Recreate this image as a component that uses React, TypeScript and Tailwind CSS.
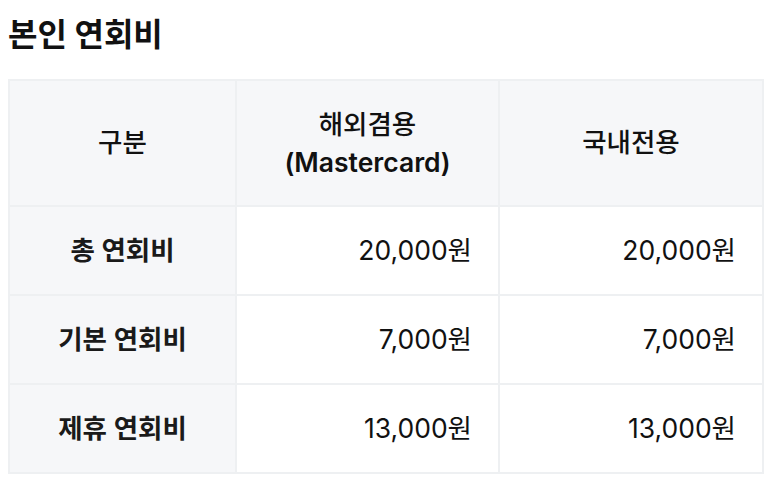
const rows = [
  { label: "총 연회비", overseas: "20,000원", domestic: "20,000원" },
  { label: "기본 연회비", overseas: "7,000원", domestic: "7,000원" },
  { label: "제휴 연회비", overseas: "13,000원", domestic: "13,000원" },
];

export default function App() {
  return (
    <div
      className="bg-white px-2 pt-[12px] text-[#111]"
      style={{ fontFamily: 'Inter, "Noto Sans CJK KR", sans-serif' }}
    >
      <h2 className="text-[32px] font-bold leading-[46px]">본인 연회비</h2>
      <table className="mt-[21px] w-[754px] table-fixed border-collapse text-[26.5px]">
        <colgroup>
          <col className="w-[227px]" />
          <col className="w-[263px]" />
          <col className="w-[264px]" />
        </colgroup>
        <thead>
          <tr className="h-[126px] bg-[#f6f7f9]">
            <th className="border-2 border-[#eef0f2] font-medium">구분</th>
            <th className="border-2 border-[#eef0f2] font-medium leading-[38px]">
              해외겸용
              <br />
              <span className="font-semibold">(Mastercard)</span>
            </th>
            <th className="border-2 border-[#eef0f2] font-medium">국내전용</th>
          </tr>
        </thead>
        <tbody>
          {rows.map(r => (
            <tr key={r.label} className="h-[89px]">
              <td className="border-2 border-[#eef0f2] bg-[#f6f7f9] text-center font-semibold text-[#1a1a1a]">
                {r.label}
              </td>
              <td className="border-2 border-[#eef0f2] pr-[26px] text-right">{r.overseas}</td>
              <td className="border-2 border-[#eef0f2] pr-[26px] text-right">{r.domestic}</td>
            </tr>
          ))}
        </tbody>
      </table>
    </div>
  );
}
